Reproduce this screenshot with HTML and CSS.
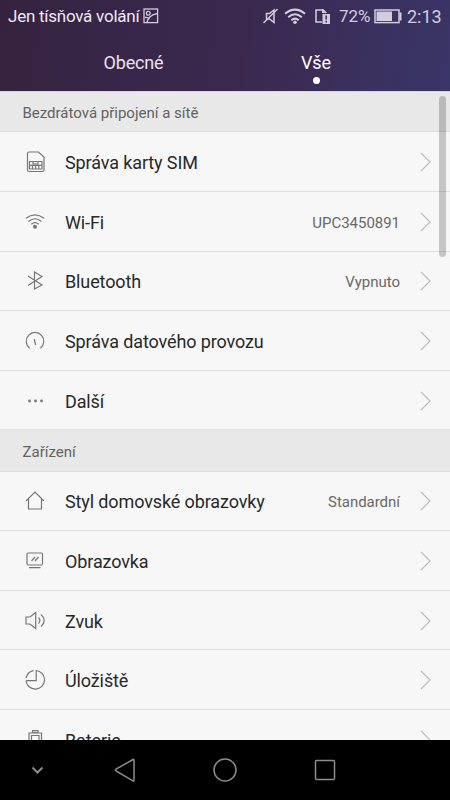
FILE: index.html
```
<!DOCTYPE html>
<html lang="cs">
<head>
<meta charset="utf-8">
<title>Nastavení</title>
<link rel="stylesheet" href="styles.css">
</head>
<body>
<div class="screen">
  <header class="top">
    <div class="status">
      <span class="carrier">Jen tísňová volání</span>
      <svg class="pic" width="16" height="16" viewBox="0 0 16 16"><rect x="1" y="1" width="13.6" height="13.6"/><circle cx="5.3" cy="5.3" r="1.900"/><path d="M4 14.500C5 9.500 8.500 6.500 14.500 5.500M2 9.500q2.500-.5 4.500 1.500"/></svg>
      <svg class="mute" width="17" height="18" viewBox="0 0 17 18"><path d="M4.500 6.500h3l4.500-3.500v12.500L7.500 12H4.500z"/><path d="M1.500 16L15.500 2"/></svg>
      <svg class="wifi" width="22" height="17" viewBox="0 0 22 17"><path d="M1 5.800Q11-2.500 21 5.800M4.200 9.200Q11 3.200 17.800 9.200M7.300 12.200Q11 9 14.700 12.200"/><circle cx="11" cy="14.300" r="1.800"/></svg>
      <svg class="simwarn" width="17" height="17" viewBox="0 0 17 17"><path d="M8 14H2V2h7l3 3"/><path class="solid" d="M8 1h1l4 4H8zM8.500 6h7.500v10H8.500z"/><path class="mark" d="M12.200 7.500v4M12.200 12.800v1.700"/></svg>
      <span class="percent">72%</span>
      <svg class="battery" width="28" height="15" viewBox="0 0 28 15"><rect x="1" y="1" width="24" height="12.600"/><path class="solid" d="M2.500 2.500h15.500v9.600H2.500zM25.500 3.500H27.500v8h-2z"/></svg>
      <span class="clock">2:13</span>
    </div>
    <nav class="tabs">
      <span class="tab general">Obecné</span>
      <span class="tab all">Vše</span>
    </nav>
  </header>

  <main class="list">
    <h2 class="section">Bezdrátová připojení a sítě</h2>
    <div class="row"><svg class="icon" viewBox="0 0 22 22"><path d="M4 1h9.500l5.500 5v13q0 1.500-1.500 1.500H4q-1.500 0-1.500-1.500V2.500Q2.500 1 4 1z"/><path d="M4.500 10.500h12.500v7.500h-12.500zM4.500 14.300h12.500M8 10.500v2.500h5v-2.500M7.500 14.300V18M10.700 14.300V18M13.800 14.300V18"/></svg><span class="label">Správa karty SIM</span><svg class="arrow" viewBox="0 0 12 20"><path d="M1 1l9 9-9 9"/></svg></div>
    <div class="row"><svg class="icon" viewBox="0 0 22 22"><path d="M1 7.300Q10 .3 19 7.300M3.500 10.500Q10 5 16.500 10.500M6.300 13.300Q10 10 13.700 13.300"/><circle class="dot" cx="10" cy="15.800" r="2"/></svg><span class="label">Wi-Fi</span><span class="value">UPC3450891</span><svg class="arrow" viewBox="0 0 12 20"><path d="M1 1l9 9-9 9"/></svg></div>
    <div class="row"><svg class="icon" viewBox="0 0 22 22"><path d="M3 6l14 9-7.500 4V2l7.500 4.500L3 15.500"/></svg><span class="label">Bluetooth</span><span class="value">Vypnuto</span><svg class="arrow" viewBox="0 0 12 20"><path d="M1 1l9 9-9 9"/></svg></div>
    <div class="row"><svg class="icon" viewBox="0 0 22 22"><path d="M4.600 18.200A8.800 8.800 0 1 1 15.400 18.200M9.300 9l1.300 6"/></svg><span class="label">Správa datového provozu</span><svg class="arrow" viewBox="0 0 12 20"><path d="M1 1l9 9-9 9"/></svg></div>
    <div class="row"><svg class="icon" viewBox="0 0 22 22"><g class="dot"><circle cx="4.500" cy="11" r="1.400"/><circle cx="10.500" cy="11" r="1.400"/><circle cx="16.500" cy="11" r="1.400"/></g></svg><span class="label">Další</span><svg class="arrow" viewBox="0 0 12 20"><path d="M1 1l9 9-9 9"/></svg></div>

    <h2 class="section device">Zařízení</h2>
    <div class="row"><svg class="icon" viewBox="0 0 22 22"><path d="M1 11l9-9 9 9M3.500 9v10h13V9"/></svg><span class="label">Styl domovské obrazovky</span><span class="value">Standardní</span><svg class="arrow" viewBox="0 0 12 20"><path d="M1 1l9 9-9 9"/></svg></div>
    <div class="row"><svg class="icon" viewBox="0 0 22 22"><rect x="2" y="3" width="15.500" height="12" rx="1.200"/><path d="M4 17.700h11.500M6.500 11l3.500-4M10 11l3.500-4"/></svg><span class="label">Obrazovka</span><svg class="arrow" viewBox="0 0 12 20"><path d="M1 1l9 9-9 9"/></svg></div>
    <div class="row"><svg class="icon" viewBox="0 0 22 22"><path d="M1 7h4l5.700-4.500v16L5 14H1zM13.500 7.500q2.800 3 0 6M16 4.500q6.500 6 0 12"/></svg><span class="label">Zvuk</span><svg class="arrow" viewBox="0 0 12 20"><path d="M1 1l9 9-9 9"/></svg></div>
    <div class="row"><svg class="icon" viewBox="0 0 22 22"><path d="M1 11.700H11.200V1.500A9.300 9.300 0 1 1 1 11.700M1.200 9A9.300 9.300 0 0 1 8.500 1.700"/></svg><span class="label">Úložiště</span><svg class="arrow" viewBox="0 0 12 20"><path d="M1 1l9 9-9 9"/></svg></div>
    <div class="row"><svg class="icon" viewBox="0 0 22 22"><path d="M4 4h12.500v16H4zM6.500 6.500h7.500v11H6.500zM7.500 1.700h5.500v2H7.500z"/></svg><span class="label">Baterie</span><svg class="arrow" viewBox="0 0 12 20"><path d="M1 1l9 9-9 9"/></svg></div>
    <div class="scrollbar"></div>
  </main>

  <footer class="navbar">
    <svg width="75" height="60" viewBox="0 0 75 60"><path d="M32.500 27.500l5 5 5-5"/></svg>
    <svg width="100" height="60" viewBox="0 0 100 60"><path class="thin" d="M59 20v20.500q0 1-1 .4L41 31q-1-1 0-1.800L58 19.500q1-.5 1 .5z"/></svg>
    <svg width="100" height="60" viewBox="0 0 100 60"><circle class="thin" cx="50" cy="30" r="11"/></svg>
    <svg width="100" height="60" viewBox="0 0 100 60"><rect class="thin" x="40.500" y="20.500" width="19" height="19" rx="1"/></svg>
  </footer>
</div>
</body>
</html>
```
FILE: styles.css
```
* { box-sizing: border-box; }
body { margin: 0; font-family: Roboto, "Noto Sans", sans-serif; }
svg { display: block; flex: none; fill: none; }
.screen { width: 450px; height: 800px; overflow: hidden; display: flex; flex-direction: column; background: #000; }

.top {
  flex: none;
  height: 91px;
  background: linear-gradient(98deg, #35223e, #38274a 30%, #3a284e 52%, #3b2c56 68%, #3a315f 82%, #393566);
}
.status { display: flex; align-items: center; height: 32px; padding-left: 8px; color: #d3cddb; font-size: 17px; white-space: nowrap; }
.status svg { stroke: #d3cddb; stroke-width: 1.5; }
.status .solid, .status .wifi circle { fill: #d3cddb; stroke: none; }
.status .mark { stroke: #393056; }
.carrier { width: 133px; color: #f0e9f3; font-size: 17px; letter-spacing: -.25px; }
.status .pic { margin-left: 2px; stroke-width: 1.3; }
.mute { margin-left: 103px; }
.wifi { margin-left: 5px; }
.wifi path { stroke-width: 2; }
.simwarn { margin-left: 8px; }
.percent { width: 34px; margin-left: 8px; }
.battery { margin-left: 1px; }
.clock { margin-left: 5px; font-size: 18px; }

.tabs { display: flex; height: 59px; }
.tab { display: flex; flex-direction: column; align-items: center; font-size: 18px; letter-spacing: -.15px; line-height: 24px; padding-top: 19px; color: #ebe2ef; }
.general { width: 267px; }
.all { width: 98px; color: #fff; }
.all::after { content: ""; width: 7px; height: 7px; margin-top: 2px; border-radius: 50%; background: #fff; }

.list { position: relative; flex: none; height: 649px; overflow: hidden; background: #f7f7f7; border-top: 1px solid #d9d3df; }
.section { height: 40.400px; margin: 0; padding-left: 22.500px; border-bottom: 1px solid #dcdcdc; background: #e8e8e8; color: #626262; font-size: 15px; font-weight: 400; line-height: 42px; }
.device { height: 41.300px; line-height: 44px; }
.row { display: flex; align-items: center; height: 59.600px; padding: 0 18px 0 25px; border-bottom: 1px solid #dfdfdf; }
.icon { width: 22px; height: 22px; stroke: #777; stroke-width: 1.200; }
.icon, .arrow { position: relative; top: .5px; }
.dot { fill: #777; stroke: none; }
.label { margin-left: 18px; color: #292929; font-size: 18px; letter-spacing: -.12px; line-height: 24px; padding-top: 3px; white-space: nowrap; }
.value { margin-left: auto; padding-top: 3px; color: #686868; font-size: 15px; letter-spacing: -.03px; }
.arrow { width: 12px; height: 20px; margin-left: auto; stroke: #bababa; stroke-width: 1.100; }
.value + .arrow { margin-left: 20px; }
.scrollbar { position: absolute; top: 4px; right: 4px; width: 7px; height: 161px; border-radius: 4px; background: rgba(0, 0, 0, .2); }

.navbar { display: flex; height: 60px; background: #000; }
.navbar svg { stroke: #8c8c8c; stroke-width: 2; }
.navbar .thin { stroke-width: 1.500; }
```
